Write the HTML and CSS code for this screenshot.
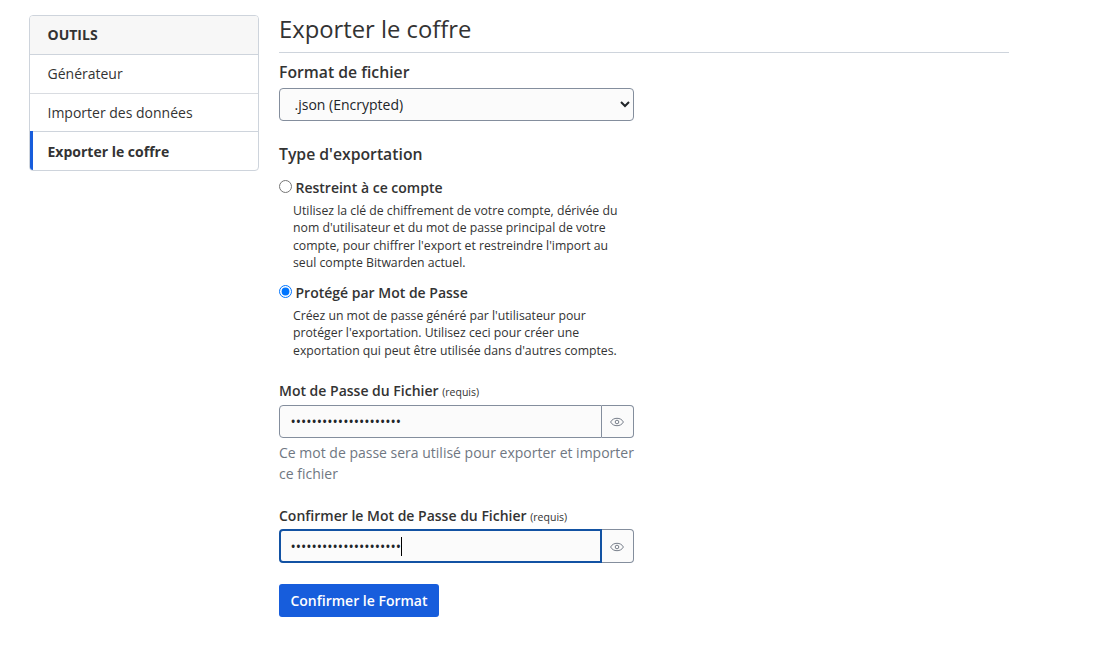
FILE: index.html
```html
<!DOCTYPE html>
<html lang="fr">
<head>
<meta charset="utf-8">
<title>Exporter le coffre</title>
<link rel="stylesheet" href="styles.css">
</head>
<body>
<div class="page">
  <nav class="card">
    <div class="card-header">Outils</div>
    <a class="item">Générateur</a>
    <a class="item">Importer des données</a>
    <a class="item active">Exporter le coffre</a>
  </nav>
  <main class="content">
    <h1>Exporter le coffre</h1>
    <form class="form">
      <label class="section-label" for="format">Format de fichier</label>
      <select id="format" class="select"><option>.json (Encrypted)</option></select>

      <div class="section-label type-label">Type d'exportation</div>
      <label class="radio"><input type="radio" name="type"><span>Restreint à ce compte</span></label>
      <p class="hint">Utilisez la clé de chiffrement de votre compte, dérivée du nom d'utilisateur et du mot de passe principal de votre compte, pour chiffrer l'export et restreindre l'import au seul compte Bitwarden actuel.</p>
      <label class="radio"><input type="radio" name="type" checked><span>Protégé par Mot de Passe</span></label>
      <p class="hint">Créez un mot de passe généré par l'utilisateur pour protéger l'exportation. Utilisez ceci pour créer une exportation qui peut être utilisée dans d'autres comptes.</p>

      <label class="field-label first">Mot de Passe du Fichier <small>(requis)</small></label>
      <div class="group">
        <input class="password" type="password" value="aaaaaaaaaaaaaaaaaaaaa">
        <button class="eye" type="button" aria-label="Afficher"><svg width="14" height="10" viewBox="0 0 14 10"><path d="M.6 5C2 2.400 4.300 1.300 7 1.300s5 1.100 6.400 3.700C12 7.600 9.700 8.700 7 8.700S2 7.600.6 5Z"/><circle cx="7" cy="5" r="1.800"/></svg></button>
      </div>
      <p class="help">Ce mot de passe sera utilisé pour exporter et importer ce fichier</p>

      <label class="field-label second">Confirmer le Mot de Passe du Fichier <small>(requis)</small></label>
      <div class="group">
        <input class="password focused" type="password" value="aaaaaaaaaaaaaaaaaaaaa">
        <span class="caret"></span>
        <button class="eye" type="button" aria-label="Afficher"><svg width="14" height="10" viewBox="0 0 14 10"><path d="M.6 5C2 2.400 4.300 1.300 7 1.300s5 1.100 6.400 3.700C12 7.600 9.700 8.700 7 8.700S2 7.600.6 5Z"/><circle cx="7" cy="5" r="1.800"/></svg></button>
      </div>
      <button class="submit" type="button">Confirmer le Format</button>
    </form>
  </main>
</div>
</body>
</html>
```
FILE: styles.css
```css
* { box-sizing: border-box; }
body { margin: 0; background: #fff; color: #333; font: 14px/21px "Open Sans", sans-serif; }
.page { display: flex; align-items: flex-start; gap: 20px; padding: 15px 93px 0 29px; }
.card { width: 230px; flex: none; border: 1px solid #ced4dc; border-radius: 4px; overflow: clip; }
.card-header { height: 39px; padding: 8px 17.5px; background: #f7f7f7; border-bottom: 1px solid #ced4dc; font-weight: 700; text-transform: uppercase; }
.item { display: block; height: 39px; padding: 8px 17.5px; border-bottom: 1px solid #d9dce1; }
.item:nth-child(3) { height: 38px; border-color: #ced4dc; }
.item.active { height: 38px; padding-left: 14.5px; padding-top: 9px; border-bottom: 0; font-weight: 700; position: relative; border-left: 3px solid #175ddc; }
.item.active::before { content: ""; position: absolute; left: -3px; top: -1px; width: 3px; height: 1px; background: #175ddc; }
.content { flex: 1; }
h1 { margin: 0; height: 38px; border-bottom: 1px solid #ced4dc; font-size: 23.8px; line-height: 28px; font-weight: 400; }
.form { width: 355px; }
.section-label { display: block; height: 24px; margin-top: 7px; margin-bottom: 4px; font-size: 15.75px; line-height: 24px; font-weight: 600; }
.select { display: block; width: 355px; height: 33px; padding: 0 11px 0 10.5px; border: 1px solid #848e9d; border-radius: 4px; background: #fbfbfb; color: #212529; font: 14px/21px "Open Sans", sans-serif; }
.type-label { margin-top: 21px; margin-bottom: 11px; }
.radio { display: flex; align-items: flex-start; height: 21px; font-weight: 600; }
.radio input { width: 13px; height: 13px; margin: 3px 3.5px 0 0; }
.hint { margin: 3.7px 0 10.3px 14px; font-size: 12.25px; line-height: 17.5px; }
.field-label { display: block; height: 21px; font-weight: 600; }
.field-label small { font-size: 10.5px; font-weight: 400; }
.first { margin-top: 20.5px; margin-bottom: 4px; }
.second { margin-top: 21px; margin-bottom: 3px; }
.group { display: flex; position: relative; height: 33px; }
.second + .group { height: 34px; }
.second + .group .eye { padding-top: 2px; }
.password { width: 323px; padding: 0 10.5px; border: 1px solid #848e9d; border-radius: 4px 0 0 4px; outline: 0; background: #fbfbfb; color: #212529; font: 14px/21px "Open Sans", sans-serif; }
.focused { padding: 1px 9.5px 0; border: 2px solid #1252a3; }
.caret { position: absolute; left: 122px; top: 8px; width: 1px; height: 19px; background: #000; }
.eye { display: flex; align-items: center; justify-content: center; width: 32px; padding: 1px 1px 0 0; border: 1px solid #848e9d; border-left: 0; border-radius: 0 4px 4px 0; background: #fbfbfb; }
.eye svg { fill: none; stroke: #777e8a; stroke-width: 1; }
.help { margin: 4px 0 0; color: #6f7782; }
.submit { display: block; width: 160px; height: 33px; margin-top: 21px; padding: 0; border: 0; border-radius: 3px; background: #175ddc; color: #fff; font: 600 14px/21px "Open Sans", sans-serif; }
```
